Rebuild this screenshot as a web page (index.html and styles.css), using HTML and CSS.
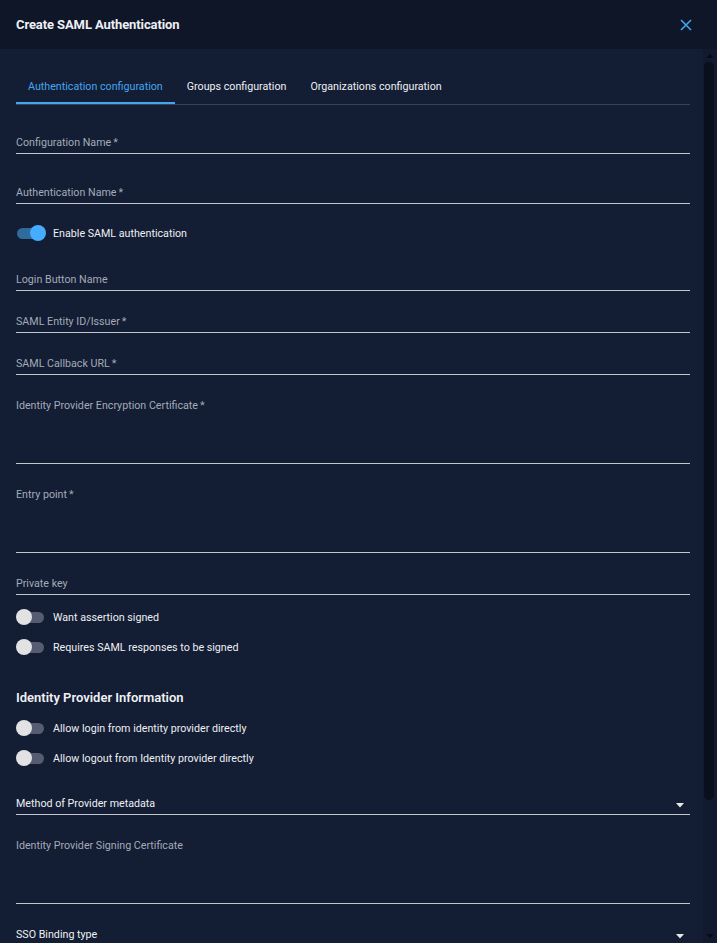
FILE: index.html
```html
<!DOCTYPE html>
<html lang="en">
<head>
<meta charset="utf-8">
<title>Create SAML Authentication</title>
<link rel="stylesheet" href="styles.css">
</head>
<body>
<div class="dialog">
  <header class="header">
    <h1 class="title">Create SAML Authentication</h1>
    <button class="close" aria-label="Close">
      <svg width="12" height="12" viewBox="0 0 12 12"><path d="M1 1L11 11M11 1L1 11" stroke="#3fa6f2" stroke-width="1.6" fill="none"/></svg>
    </button>
  </header>
  <div class="body">
    <div class="content">
      <nav class="tabs">
        <div class="tab active">Authentication configuration</div>
        <div class="tab">Groups configuration</div>
        <div class="tab">Organizations configuration</div>
      </nav>

      <div class="field f1"><span class="label">Configuration Name<span class="req">*</span></span></div>
      <div class="field f2"><span class="label">Authentication Name<span class="req">*</span></span></div>
      <div class="switch-row s1">
        <span class="switch on"><span class="track"></span><span class="thumb"></span></span>
        <span class="switch-text">Enable SAML authentication</span>
      </div>
      <div class="field f3"><span class="label">Login Button Name</span></div>
      <div class="field f4"><span class="label">SAML Entity ID/Issuer<span class="req">*</span></span></div>
      <div class="field f4"><span class="label">SAML Callback URL<span class="req">*</span></span></div>
      <div class="field f4 tall"><span class="label">Identity Provider Encryption Certificate<span class="req">*</span></span></div>
      <div class="field f4 tall"><span class="label">Entry point<span class="req">*</span></span></div>
      <div class="field f4"><span class="label">Private key</span></div>
      <div class="switch-row s2">
        <span class="switch"><span class="track"></span><span class="thumb"></span></span>
        <span class="switch-text">Want assertion signed</span>
      </div>
      <div class="switch-row s3">
        <span class="switch"><span class="track"></span><span class="thumb"></span></span>
        <span class="switch-text">Requires SAML responses to be signed</span>
      </div>
      <h2 class="section">Identity Provider Information</h2>
      <div class="switch-row s3">
        <span class="switch"><span class="track"></span><span class="thumb"></span></span>
        <span class="switch-text">Allow login from identity provider directly</span>
      </div>
      <div class="switch-row s3">
        <span class="switch"><span class="track"></span><span class="thumb"></span></span>
        <span class="switch-text">Allow logout from Identity provider directly</span>
      </div>
      <div class="field select f5"><span class="label">Method of Provider metadata</span>
        <svg class="caret" width="8" height="5" viewBox="0 0 8 5"><path d="M0 0H8L4 4.5Z" fill="#e6e8ee"/></svg>
      </div>
      <div class="field f4 tall"><span class="label">Identity Provider Signing Certificate</span></div>
      <div class="field select f6"><span class="label">SSO Binding type</span>
        <svg class="caret" width="8" height="5" viewBox="0 0 8 5"><path d="M0 0H8L4 4.5Z" fill="#e6e8ee"/></svg>
      </div>
    </div>
    <div class="scrollbar" aria-hidden="true">
      <svg class="sb-arrow" width="14" height="13" viewBox="0 0 14 13"><path d="M3.5 9H10.5L7 5Z" fill="#070b16"/></svg>
      <div class="sb-track"><div class="sb-thumb"></div></div>
      <svg class="sb-arrow" width="14" height="13" viewBox="0 0 14 13"><path d="M3.5 4H10.5L7 8Z" fill="#070b16"/></svg>
    </div>
  </div>
</div>
</body>
</html>
```

FILE: styles.css
```css
* { box-sizing: border-box; }
html, body { margin: 0; padding: 0; }
body {
  background: #131d33;
  font-family: Roboto, "Liberation Sans", sans-serif;
  color: #e4e7ed;
  overflow: hidden;
}
.dialog {
  height: 943px;
  display: flex;
  flex-direction: column;
  background: #131d33;
}
.header {
  height: 49px;
  flex: none;
  background: #0f1628;
  display: flex;
  align-items: center;
  justify-content: space-between;
  padding: 0 25px 0 16px;
}
.title {
  margin: 0;
  font-size: 13px;
  font-weight: 700;
  color: #eef0f4;
  letter-spacing: -0.1px;
}
.close {
  background: none;
  border: 0;
  padding: 0;
  width: 12px;
  height: 12px;
  display: flex;
}
.body {
  flex: 1;
  min-height: 0;
  display: flex;
}
.content {
  flex: 1;
  min-width: 0;
  overflow: hidden;
  padding: 0 13px 0 16px;
}
.scrollbar {
  width: 14px;
  flex: none;
  background: #111a2e;
  display: flex;
  flex-direction: column;
}
.sb-arrow { flex: none; display: block; }
.sb-track {
  flex: 1;
  padding: 0 3px 0 1px;
}
.sb-thumb {
  height: 738px;
  background: #0a0f1d;
  border-radius: 5px;
}
.tabs {
  margin-top: 21px;
  height: 35px;
  display: flex;
  border-bottom: 1px solid #394156;
}
.tab {
  padding: 0 12px;
  height: 34px;
  display: flex;
  align-items: center;
  font-size: 10.7px;
  color: #eef0f4;
  border-bottom: 2px solid transparent;
}
.tab.active {
  color: #45a6f0;
  border-bottom-color: #45a6f0;
}
.field {
  border-bottom: 1px solid #c3c7cf;
  padding-bottom: 2px;
  display: flex;
  align-items: flex-start;
  justify-content: space-between;
}
.field.tall { padding-bottom: 49px; }
.label {
  font-size: 10.7px;
  line-height: 16px;
  padding-top: 2px;
  color: #a3abb9;
}
.req { margin-left: 2px; }
.select .label { color: #eef0f4; }
.caret { margin: 9px 6px 0 0; }
.f1 { margin-top: 28px; }
.f2 { margin-top: 29px; }
.f3 { margin-top: 27px; }
.f4 { margin-top: 21px; }
.f5 { margin-top: 26px; }
.f6 { margin-top: 21px; padding-bottom: 20px; }
.switch-row {
  height: 20px;
  display: flex;
  align-items: center;
  gap: 7px;
}
.s1 { margin-top: 19px; }
.s2 { margin-top: 12px; }
.s3 { margin-top: 10px; }
.switch {
  position: relative;
  width: 30px;
  height: 20px;
  flex: none;
}
.track {
  position: absolute;
  left: 1px;
  top: 5px;
  width: 27px;
  height: 11px;
  border-radius: 6px;
  background: #565c72;
}
.thumb {
  position: absolute;
  left: 0;
  top: 2px;
  width: 16px;
  height: 16px;
  border-radius: 50%;
  background: #e2e2e4;
}
.switch.on .track { background: #2f6c9c; }
.switch.on .thumb { left: 14px; background: #45acff; }
.switch-text {
  font-size: 10.7px;
  color: #eef0f4;
}
.section {
  margin: 31px 0 0;
  height: 20px;
  line-height: 20px;
  font-size: 13px;
  font-weight: 600;
  color: #eef0f4;
}
```
